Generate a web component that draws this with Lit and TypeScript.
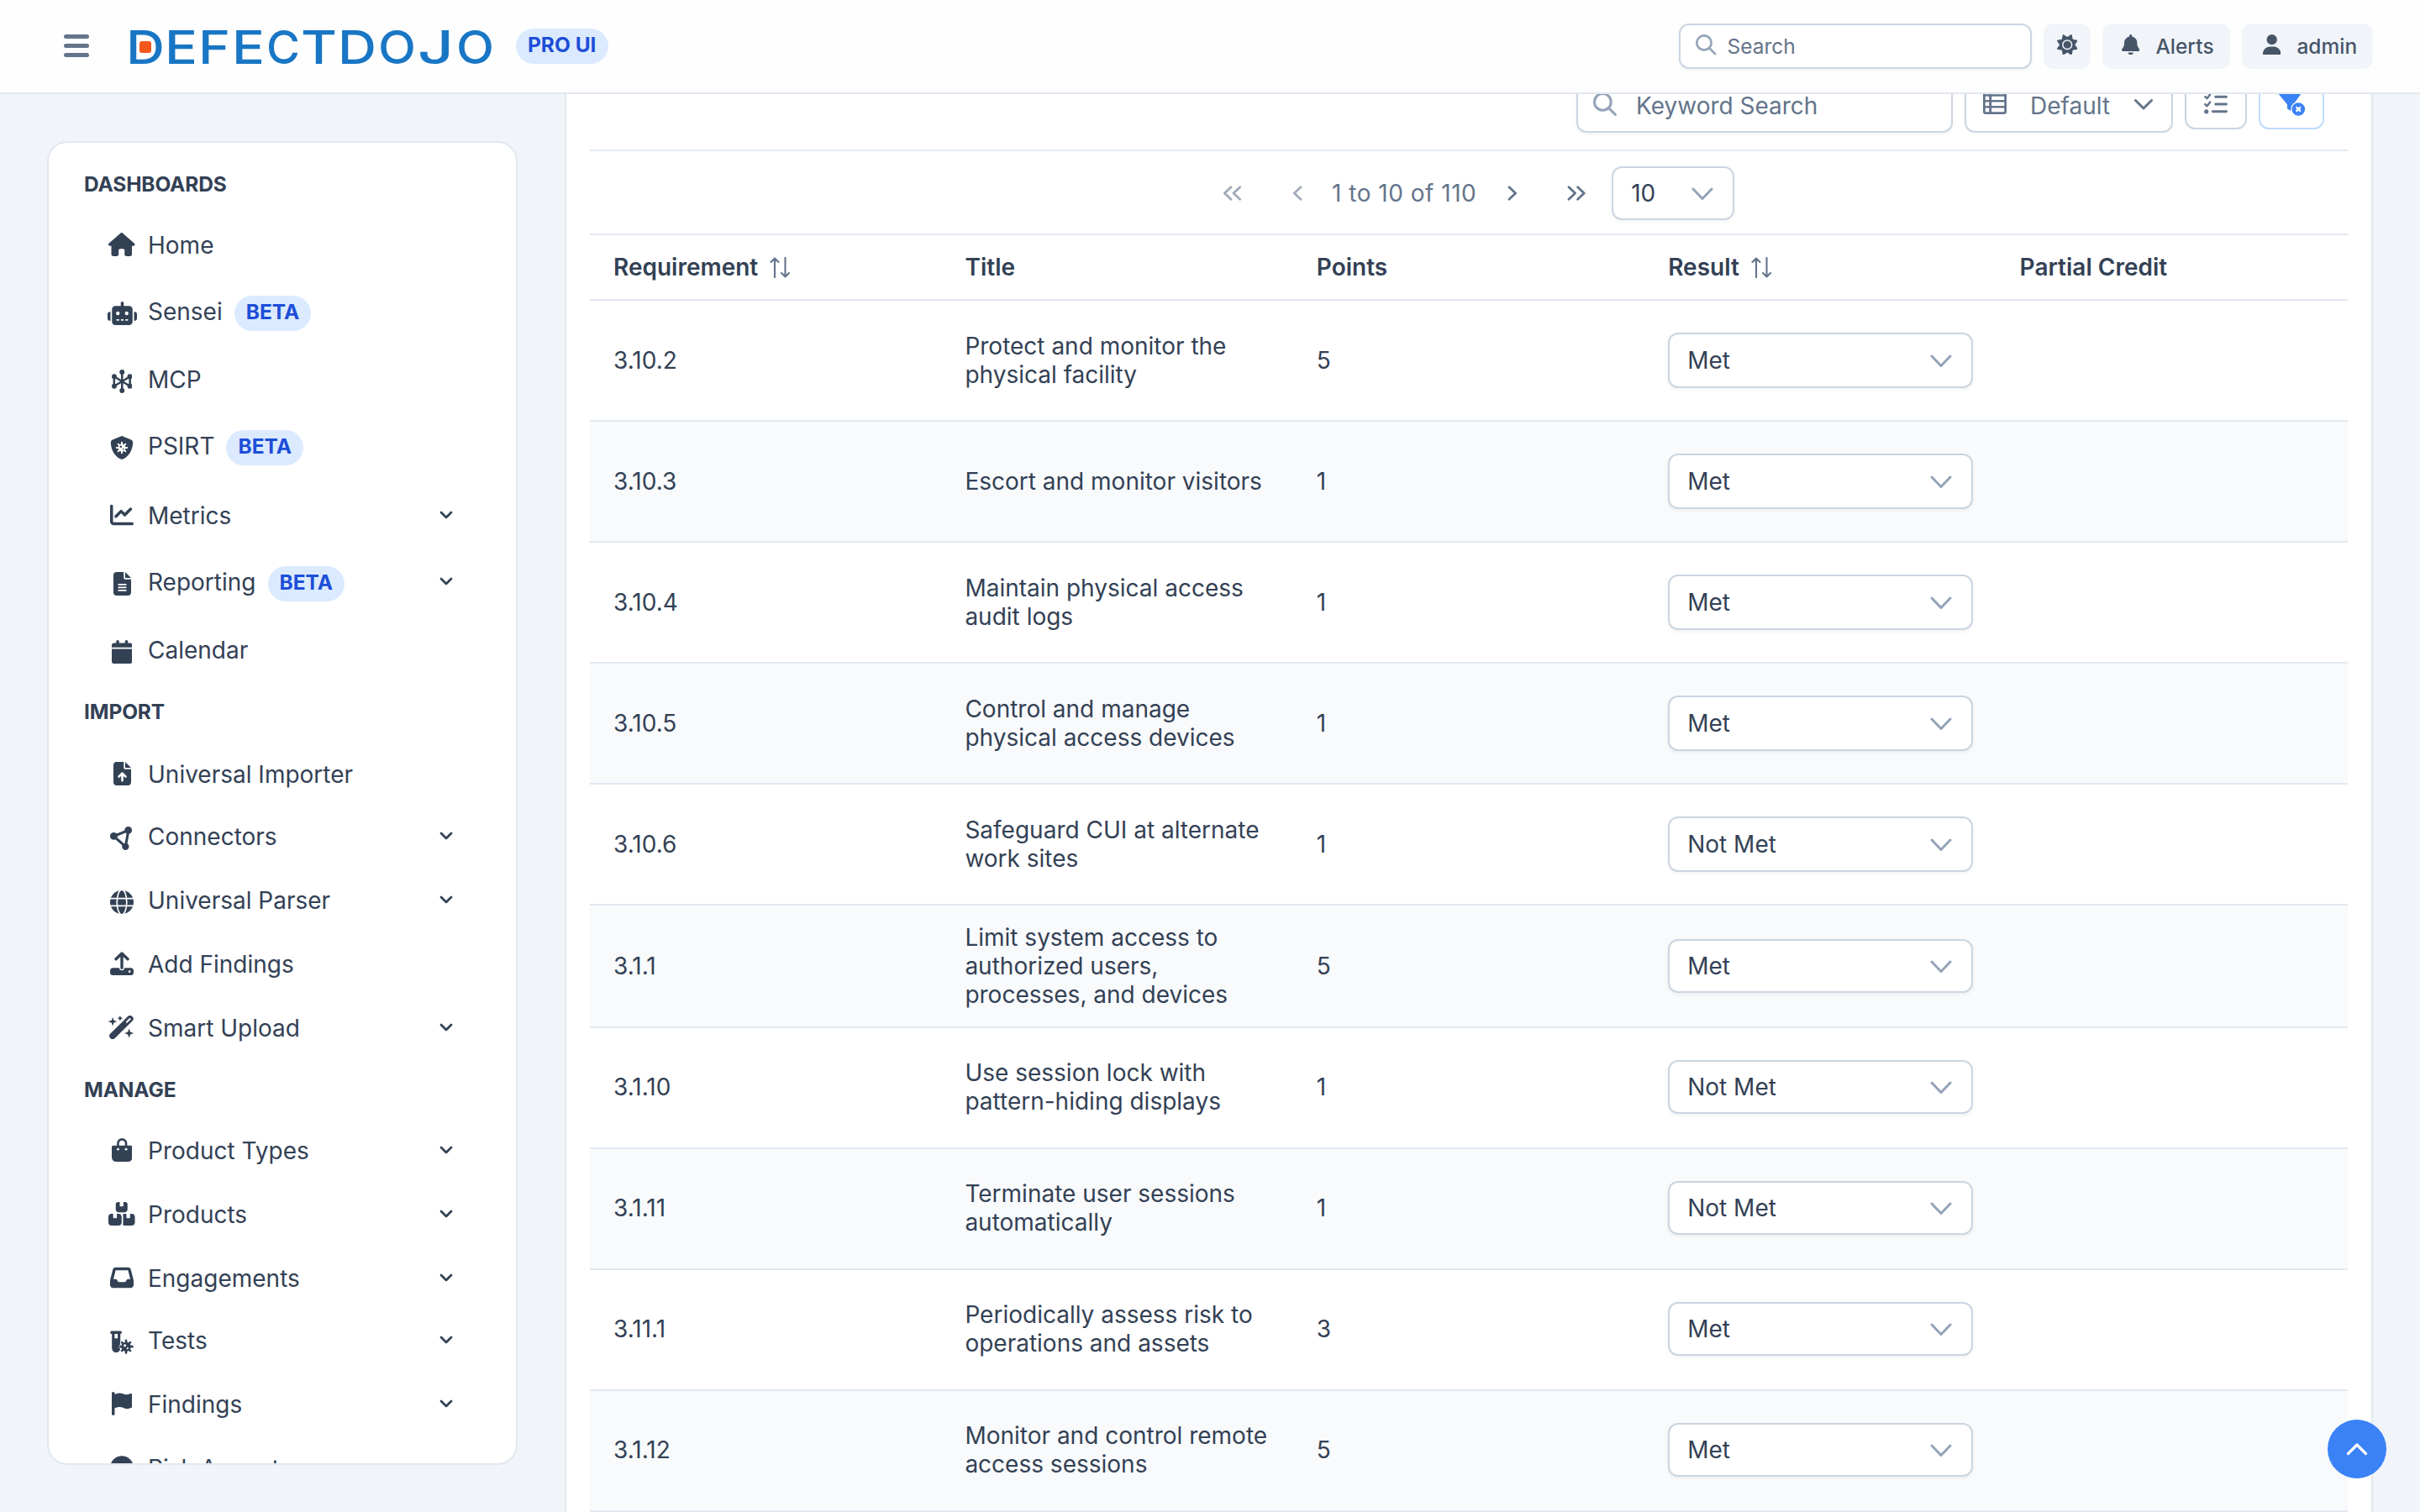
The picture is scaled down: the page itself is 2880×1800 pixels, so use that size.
import { html, LitElement, css, svg, nothing, SVGTemplateResult } from "lit";
import { customElement, property } from "lit/decorators.js";
import { classMap } from "lit/directives/class-map.js";
import { styleMap } from "lit/directives/style-map.js";
import { map } from "lit/directives/map.js";

interface Glyph {
  width: number;
  body: SVGTemplateResult;
}

const file = "M64 0C28.7 0 0 28.7 0 64L0 448c0 35.3 28.7 64 64 64l256 0c35.3 0 64-28.7 64-64l0-288-128 0c-17.7 0-32-14.3-32-32L224 0 64 0zM256 0l0 128 128 0L256 0z";

// every glyph sits on a 512 unit high grid
const glyphs: Record<string, Glyph> = {
  house: {
    width: 576,
    body: svg`<path d="M575.8 255.5c0 18-15 32.1-32 32.1l-32 0 .7 160.2c0 2.7-.2 5.4-.5 8.1l0 16.2c0 22.1-17.9 40-40 40l-16 0c-1.1 0-2.2 0-3.3-.1c-1.4 .1-2.8 .1-4.2 .1L416 512l-24 0c-22.1 0-40-17.9-40-40l0-24 0-64c0-17.7-14.3-32-32-32l-64 0c-17.7 0-32 14.3-32 32l0 64 0 24c0 22.1-17.9 40-40 40l-24 0-31.9 0c-1.5 0-3-.1-4.5-.2c-1.2 .1-2.4 .2-3.6 .2l-16 0c-22.1 0-40-17.9-40-40l0-112c0-.9 0-1.9 .1-2.8l0-69.7-32 0c-18 0-32-14-32-32.1c0-9 3-17 10-24L266.4 8c7-7 15-8 22-8s15 2 21 7L564.8 231.5c8 7 12 15 11 24z"/>`,
  },
  robot: {
    width: 640,
    body: svg`<path fill-rule="evenodd" d="M320 0c17.7 0 32 14.3 32 32l0 64 120 0c39.8 0 72 32.2 72 72l0 272c0 39.8-32.2 72-72 72l-304 0c-39.8 0-72-32.2-72-72l0-272c0-39.8 32.2-72 72-72l120 0 0-64c0-17.7 14.3-32 32-32zM208 384c-8.8 0-16 7.2-16 16s7.2 16 16 16l32 0c8.8 0 16-7.2 16-16s-7.2-16-16-16l-32 0zm96 0c-8.8 0-16 7.2-16 16s7.2 16 16 16l32 0c8.8 0 16-7.2 16-16s-7.2-16-16-16l-32 0zm96 0c-8.8 0-16 7.2-16 16s7.2 16 16 16l32 0c8.8 0 16-7.2 16-16s-7.2-16-16-16l-32 0zM264 256a40 40 0 1 0 -80 0 40 40 0 1 0 80 0zm152 40a40 40 0 1 0 0-80 40 40 0 1 0 0 80zM48 224l16 0 0 192-16 0c-26.5 0-48-21.5-48-48l0-96c0-26.5 21.5-48 48-48zm544 0c26.5 0 48 21.5 48 48l0 96c0 26.5-21.5 48-48 48l-16 0 0-192 16 0z"/>`,
  },
  nodes: {
    width: 448,
    body: svg`<g fill="none" stroke="currentColor" stroke-width="46"><path d="M224 50V462M52 150V362M396 150V362M50 150L398 362M398 150L50 362"/></g>
      <circle cx="224" cy="54" r="54"/><circle cx="224" cy="458" r="54"/><circle cx="54" cy="150" r="54"/><circle cx="54" cy="362" r="54"/><circle cx="394" cy="150" r="54"/><circle cx="394" cy="362" r="54"/>`,
  },
  shield: {
    width: 512,
    body: svg`<path d="M269.4 2.9C265.2 1 260.7 0 256 0s-9.2 1-13.4 2.9L54.3 82.8c-22 9.3-38.4 31-38.3 57.2c.5 99.2 41.3 280.7 213.6 363.2c16.7 8 36.1 8 52.8 0C454.7 420.7 495.5 239.2 496 140c.1-26.2-16.3-47.9-38.3-57.2L269.4 2.9z"/>
      <g stroke="#fff" stroke-width="36" stroke-linecap="round"><path d="M256 142V370M142 256H370M176 176L336 336M336 176L176 336"/></g>
      <circle cx="256" cy="256" r="82" fill="#fff"/><circle cx="234" cy="232" r="23"/><circle cx="288" cy="286" r="15"/>`,
  },
  chart: {
    width: 512,
    body: svg`<path d="M64 64c0-17.7-14.3-32-32-32S0 46.3 0 64L0 400c0 44.2 35.8 80 80 80l400 0c17.7 0 32-14.3 32-32s-14.3-32-32-32L80 416c-8.8 0-16-7.2-16-16L64 64zm406.6 86.6c12.5-12.5 12.5-32.8 0-45.3s-32.8-12.5-45.3 0L320 210.7l-57.4-57.4c-12.5-12.5-32.8-12.5-45.3 0l-112 112c-12.5 12.5-12.5 32.8 0 45.3s32.8 12.5 45.3 0L240 221.3l57.4 57.4c12.5 12.5 32.8 12.5 45.3 0l128-128z"/>`,
  },
  fileLines: {
    width: 384,
    body: svg`<path d=${file}/><path d="M112 272H272M112 336H272M112 400H272" stroke="#fff" stroke-width="30" stroke-linecap="round"/>`,
  },
  calendar: {
    width: 448,
    body: svg`<path d="M96 32l0 32L48 64C21.5 64 0 85.5 0 112l0 48 448 0 0-48c0-26.5-21.5-48-48-48l-48 0 0-32c0-17.7-14.3-32-32-32s-32 14.3-32 32l0 32L160 64l0-32c0-17.7-14.3-32-32-32S96 14.3 96 32zM448 192L0 192 0 464c0 26.5 21.5 48 48 48l352 0c26.5 0 48-21.5 48-48l0-272z"/>`,
  },
  fileUp: {
    width: 384,
    body: svg`<path d=${file}/><path d="M192 408V250M120 320l72-72 72 72" fill="none" stroke="#fff" stroke-width="48" stroke-linecap="round" stroke-linejoin="round"/>`,
  },
  share: {
    width: 512,
    body: svg`<path d="M80 210L400 80 336 436z" fill="none" stroke="currentColor" stroke-width="56"/>
      <circle cx="80" cy="208" r="80"/><circle cx="396" cy="80" r="80"/><circle cx="336" cy="436" r="76"/>`,
  },
  globe: {
    width: 512,
    body: svg`<circle cx="256" cy="256" r="256"/>
      <g fill="none" stroke="#fff" stroke-width="30"><path d="M0 176H512M0 336H512"/><ellipse cx="256" cy="256" rx="106" ry="272"/></g>`,
  },
  upload: {
    width: 512,
    body: svg`<path d="M64 352h384a64 64 0 0 1 64 64v32a64 64 0 0 1-64 64H64a64 64 0 0 1-64-64v-32a64 64 0 0 1 64-64z"/>
      <path d="M256 352V300" stroke="#fff" stroke-width="110" stroke-linecap="round"/>
      <path d="M256 352V50M128 160L256 36 384 160" fill="none" stroke="currentColor" stroke-width="62" stroke-linecap="round" stroke-linejoin="round"/>
      <circle cx="424" cy="432" r="24" fill="#fff"/>`,
  },
  wand: {
    width: 576,
    body: svg`<path d="M92 444L472 70" stroke="currentColor" stroke-width="140" stroke-linecap="round"/>
      <path d="M400 142L470 72" stroke="#fff" stroke-width="36" stroke-linecap="round"/>
      <path d="M94 36l26 68 68 26-68 26-26 72-26-72-70-26 70-26zM254 -4l18 44 46 18-46 18-18 46-18-46-46-18 46-18zM450 282l27 74 74 27-74 27-27 74-27-74-74-27 74-27z"/>`,
  },
  bag: {
    width: 448,
    body: svg`<path d="M32 160h384a32 32 0 0 1 32 32v224a96 96 0 0 1-96 96H96a96 96 0 0 1-96-96V192a32 32 0 0 1 32-32z"/>
      <path d="M136 180V112a88 88 0 0 1 176 0v68" fill="none" stroke="currentColor" stroke-width="48"/>
      <circle cx="136" cy="240" r="25" fill="#fff"/><circle cx="312" cy="240" r="25" fill="#fff"/>`,
  },
  boxes: {
    width: 576,
    body: svg`<path d="M248 0L208 0c-26.5 0-48 21.5-48 48l0 112c0 35.3 28.7 64 64 64l128 0c35.3 0 64-28.7 64-64l0-112c0-26.5-21.5-48-48-48L328 0l0 80c0 8.8-7.2 16-16 16l-48 0c-8.8 0-16-7.2-16-16l0-80zM64 256c-35.3 0-64 28.7-64 64L0 448c0 35.3 28.7 64 64 64l160 0c35.3 0 64-28.7 64-64l0-128c0-35.3-28.7-64-64-64l-40 0 0 80c0 8.8-7.2 16-16 16l-48 0c-8.8 0-16-7.2-16-16l0-80-40 0zM352 512l160 0c35.3 0 64-28.7 64-64l0-128c0-35.3-28.7-64-64-64l-40 0 0 80c0 8.8-7.2 16-16 16l-48 0c-8.8 0-16-7.2-16-16l0-80-40 0c-15 0-28.8 5.1-39.7 13.8c4.9 10.4 7.7 22 7.7 34.2l0 160c0 12.2-2.8 23.8-7.7 34.2C323.2 506.9 337 512 352 512z"/>`,
  },
  inbox: {
    width: 512,
    body: svg`<path fill-rule="evenodd" d="M121 32C91.6 32 66 52 58.9 80.5L1.9 308.4C.6 313.5 0 318.7 0 323.9L0 416c0 35.3 28.7 64 64 64l384 0c35.3 0 64-28.7 64-64l0-92.1c0-5.2-.6-10.4-1.9-15.5l-57-227.9C446 52 420.4 32 391 32L121 32zm0 64l270 0 48 192-51.2 0c-12.1 0-23.2 6.8-28.6 17.7l-14.3 28.6c-5.4 10.8-16.5 17.7-28.6 17.7l-120.4 0c-12.1 0-23.2-6.8-28.6-17.7l-14.3-28.6c-5.4-10.8-16.5-17.7-28.6-17.7L73 288 121 96z"/>`,
  },
  vial: {
    width: 512,
    body: svg`<path fill-rule="evenodd" d="M32 10h192a32 32 0 0 1 0 64v312a92 92 0 0 1-184 0V74a32 32 0 0 1-8-64zM98 74v96h68V74z"/>
      <g stroke="#fff" stroke-width="84" stroke-linecap="round"><path d="M348 226V474M230 350H472M260 262L436 438M436 262L260 438"/></g>
      <g stroke="currentColor" stroke-width="48" stroke-linecap="round"><path d="M348 214V486M216 350H486M256 258L440 442M440 258L256 442"/></g>
      <circle cx="348" cy="350" r="104"/><circle cx="322" cy="326" r="28" fill="#fff"/><circle cx="380" cy="386" r="20" fill="#fff"/>`,
  },
  flag: {
    width: 448,
    body: svg`<path d="M64 32C64 14.3 49.7 0 32 0S0 14.3 0 32L0 64 0 368 0 480c0 17.7 14.3 32 32 32s32-14.3 32-32l0-128 64.3-16.1c41.1-10.3 84.6-5.5 122.5 13.4c44.2 22.1 95.5 24.8 141.7 7.4l34.7-13c12.5-4.7 20.8-16.6 20.8-30l0-247.7c0-23-24.2-38-44.8-27.7l-9.6 4.8c-46.3 23.2-100.8 23.2-147.1 0c-35.1-17.6-75.4-22-113.5-12.5L64 48l0-16z"/>`,
  },
  circle: { width: 512, body: svg`<circle cx="256" cy="256" r="252"/>` },
  bell: {
    width: 448,
    body: svg`<path d="M224 0c-17.7 0-32 14.3-32 32l0 19.2C119 66 64 130.6 64 208l0 18.8c0 47-17.3 92.4-48.5 127.6l-7.4 8.3c-8.4 9.4-10.4 22.9-5.3 34.4S19.4 416 32 416l384 0c12.6 0 24-7.4 29.2-18.9s3.1-25-5.3-34.4l-7.4-8.3C401.3 319.2 384 273.9 384 226.8l0-18.8c0-77.4-55-142-128-156.8L256 32c0-17.7-14.3-32-32-32zm45.3 493.3c12-12 18.7-28.3 18.7-45.3l-64 0-64 0c0 17 6.7 33.3 18.7 45.3s28.3 18.7 45.3 18.7s33.3-6.7 45.3-18.7z"/>`,
  },
  user: {
    width: 448,
    body: svg`<path d="M224 256A128 128 0 1 0 224 0a128 128 0 1 0 0 256zm-45.7 48C79.8 304 0 383.8 0 482.3C0 498.7 13.3 512 29.7 512l388.6 0c16.4 0 29.7-13.3 29.7-29.7C448 383.8 368.2 304 269.7 304l-91.4 0z"/>`,
  },
  sun: {
    width: 512,
    body: svg`<path fill-rule="evenodd" d="M361.5 1.2c5 2.1 8.6 6.6 9.6 11.9L391 121l107.9 19.8c5.3 1 9.8 4.6 11.9 9.6s1.5 10.7-1.6 15.2L446.9 256l62.3 90.3c3.1 4.5 3.7 10.2 1.6 15.2s-6.6 8.6-11.9 9.6L391 391 371.1 498.9c-1 5.3-4.6 9.8-9.6 11.9s-10.7 1.5-15.2-1.6L256 446.9l-90.3 62.3c-4.5 3.1-10.2 3.7-15.2 1.6s-8.6-6.6-9.6-11.9L121 391 13.1 371.1c-5.3-1-9.8-4.6-11.9-9.6s-1.5-10.7 1.6-15.2L65.1 256 2.8 165.7c-3.1-4.5-3.7-10.2-1.6-15.2s6.6-8.6 11.9-9.6L121 121 140.9 13.1c1-5.3 4.6-9.8 9.6-11.9s10.7-1.5 15.2 1.6L256 65.1 346.3 2.8c4.5-3.1 10.2-3.7 15.2-1.6zM384 256a128 128 0 1 0 -256 0 128 128 0 1 0 256 0z"/><circle cx="256" cy="256" r="96"/>`,
  },
  search: {
    width: 512,
    body: svg`<g fill="none" stroke="currentColor" stroke-width="56" stroke-linecap="round"><circle cx="208" cy="208" r="180"/><path d="M340 340L484 484"/></g>`,
  },
  table: {
    width: 512,
    body: svg`<rect width="512" height="512" rx="56"/><path fill="#fff" d="M50 4h82v74H50zM186 4h276v74H186zM50 124h82v76H50zM186 124h276v76H186zM50 246h82v84H50zM186 246h276v84H186zM50 376h82v86H50zM186 376h276v86H186z"/>`,
  },
  checklist: {
    width: 512,
    body: svg`<g fill="none" stroke="currentColor" stroke-width="54" stroke-linecap="round" stroke-linejoin="round"><path d="M250 96H484M250 256H484M190 416H484"/><path d="M24 92l40 40 68-88M24 258l40 40 68-88" stroke-width="44"/></g><circle cx="50" cy="416" r="48"/>`,
  },
  funnel: {
    width: 584,
    body: svg`<path d="M0 20H512L336 260V440L200 350V260z"/><circle cx="444" cy="366" r="166" fill="#fff"/><circle cx="444" cy="366" r="142"/>
      <path d="M396 318l96 96M492 318l-96 96" stroke="#fff" stroke-width="42"/>`,
  },
};

@customElement("ui-icon")
export class UiIcon extends LitElement {
  @property() name = "";

  static styles = css`
    :host {
      display: inline-flex;
      font-size: 28px;
    }

    svg {
      height: 1em;
      fill: currentColor;
    }
  `;

  render() {
    const glyph = glyphs[this.name];
    return html`<svg
      viewBox="0 0 ${glyph.width} 512"
      style=${styleMap({ width: `${glyph.width / 512}em` })}
      aria-hidden="true"
    >
      ${glyph.body}
    </svg>`;
  }
}

// open stroked marks: chevrons and the sort arrows
const strokes: Record<string, { w: number; h: number; d: string; weight: number }> = {
  down: { w: 26, h: 16, d: "M2 2L13 13.5 24 2", weight: 3 },
  downWide: { w: 24, h: 16, d: "M2.5 2.5L12 12 21.5 2.5", weight: 3 },
  downSmall: { w: 16, h: 10, d: "M2 2L8 8 14 2", weight: 2.8 },
  up: { w: 26, h: 16, d: "M2.5 13.5L13 3 23.5 13.5", weight: 3.2 },
  left: { w: 12, h: 18, d: "M10 1.8L2.4 9 10 16.2", weight: 2.8 },
  right: { w: 12, h: 18, d: "M2 1.8L9.6 9 2 16.2", weight: 2.8 },
  first: { w: 23, h: 18, d: "M10 1.8L2.4 9 10 16.2M20.6 1.8L13 9 20.6 16.2", weight: 2.8 },
  last: { w: 23, h: 18, d: "M2 1.8L9.6 9 2 16.2M12.6 1.8L20.2 9 12.6 16.2", weight: 2.8 },
  sort: { w: 25, h: 25, d: "M6 24V1.5M1.5 6L6 1.5 10.5 6M18.5 1V23.5M14 19L18.5 23.5 23 19", weight: 2.1 },
};

const stroke = (name: string) => {
  const s = strokes[name];
  return html`<svg
    class="stroke"
    width=${s.w}
    height=${s.h}
    viewBox="0 0 ${s.w} ${s.h}"
    fill="none"
    stroke="currentColor"
    stroke-width=${s.weight}
    stroke-linecap="round"
    stroke-linejoin="round"
    aria-hidden="true"
  >
    <path d=${s.d} />
  </svg>`;
};

interface NavItem {
  icon: string;
  label: string;
  height: number;
  beta?: boolean;
  opens?: boolean;
  low?: boolean;
}

interface NavSection {
  title: string;
  height: number;
  items: NavItem[];
}

const sections: NavSection[] = [
  {
    title: "DASHBOARDS",
    height: 71,
    items: [
      { icon: "house", label: "Home", height: 79 },
      { icon: "robot", label: "Sensei", height: 81, beta: true, low: true },
      { icon: "nodes", label: "MCP", height: 79, low: true },
      { icon: "shield", label: "PSIRT", height: 83, beta: true, low: true },
      { icon: "chart", label: "Metrics", height: 79, opens: true },
      { icon: "fileLines", label: "Reporting", height: 81, beta: true, opens: true, low: true },
      { icon: "calendar", label: "Calendar", height: 75, low: true },
    ],
  },
  {
    title: "IMPORT",
    height: 73,
    items: [
      { icon: "fileUp", label: "Universal Importer", height: 74 },
      { icon: "share", label: "Connectors", height: 76, opens: true, low: true },
      { icon: "globe", label: "Universal Parser", height: 76, opens: true, low: true },
      { icon: "upload", label: "Add Findings", height: 76 },
      { icon: "wand", label: "Smart Upload", height: 75, opens: true },
    ],
  },
  {
    title: "MANAGE",
    height: 71,
    items: [
      { icon: "bag", label: "Product Types", height: 76, opens: true },
      { icon: "boxes", label: "Products", height: 76, opens: true },
      { icon: "inbox", label: "Engagements", height: 74, opens: true },
      { icon: "vial", label: "Tests", height: 76, opens: true, low: true },
      { icon: "flag", label: "Findings", height: 76, opens: true },
      { icon: "circle", label: "Risk Acceptances", height: 76, opens: true },
    ],
  },
];

@customElement("side-nav")
export class SideNav extends LitElement {
  static styles = css`
    :host {
      display: block;
      box-sizing: border-box;
      width: 560px;
      height: 1576px;
      padding: 34px 42px 0;
      overflow: hidden;
      border: 2px solid #e2e8f0;
      border-radius: 24px;
      background: #fff;
      color: #334155;
      font-size: 28px;
      line-height: 34px;
    }

    .title {
      font-size: 24.5px;
      font-weight: 700;
      letter-spacing: -0.15px;
      line-height: 30px;
    }

    .item {
      display: flex;
      align-items: flex-start;
    }

    .icon {
      display: flex;
      flex: none;
      justify-content: center;
      width: 36px;
      margin: 2px 13px 0 27px;
    }

    .low .icon {
      margin-top: 5px;
    }

    .label {
      flex: none;
      white-space: nowrap;
    }

    .beta {
      box-sizing: border-box;
      height: 42px;
      margin: -2px 0 0 14px;
      padding: 4px 14px 0;
      border-radius: 21px;
      background: #dbeafe;
      color: #1d4ed8;
      font-size: 24.5px;
      font-weight: 700;
      line-height: 30px;
    }

    .caret {
      display: flex;
      margin: 11px 33px 0 auto;
    }
  `;

  render() {
    return html`${map(
      sections,
      (section) => html`
        <div class="title" style=${styleMap({ height: `${section.height}px` })}>
          ${section.title}
        </div>
        ${map(
          section.items,
          (item) => html`<div
            class=${classMap({ item: true, low: !!item.low })}
            style=${styleMap({ height: `${item.height}px` })}
          >
            <span class="icon"><ui-icon name=${item.icon}></ui-icon></span>
            <span class="label">${item.label}</span>
            ${item.beta ? html`<span class="beta">BETA</span>` : nothing}
            ${item.opens ? html`<span class="caret">${stroke("downSmall")}</span>` : nothing}
          </div>`
        )}
      `
    )}`;
  }
}

// letter, left edge and width of each character in the wordmark
const wordmark: [string, number, number][] = [
  ["D", -3, 46],
  ["E", 43, 39],
  ["F", 83, 38],
  ["E", 123, 39],
  ["C", 164, 40],
  ["T", 205, 43],
  ["D", 249, 46],
  ["O", 297, 45],
  ["J", 344, 43],
  ["O", 390, 45],
];

@customElement("top-bar")
export class TopBar extends LitElement {
  static styles = css`
    :host {
      display: flex;
      align-items: flex-start;
      box-sizing: border-box;
      height: 112px;
      padding: 28px 56px 0 76px;
      border-bottom: 2px solid #e2e8f0;
      background: #fefefe;
      color: #475569;
      font-size: 24.5px;
      line-height: 30px;
    }

    .menu {
      display: flex;
      flex-direction: column;
      gap: 6px;
      width: 30px;
      margin-top: 13px;
    }

    .bar {
      height: 5px;
      border-radius: 3px;
      background: #64748b;
    }

    .logo {
      width: 434px;
      height: 70px;
      margin: -7px 0 0 47px;
      overflow: visible;
      fill: #1976c5;
      font: 500 55px Inter, sans-serif;
    }

    .dot {
      fill: #f4581c;
    }

    .pro {
      box-sizing: border-box;
      width: 110px;
      height: 42px;
      margin: 6px auto 0 27px;
      padding: 4px 0 0 14px;
      border-radius: 21px;
      background: #dbeafe;
      color: #1d4ed8;
      font-weight: 700;
    }

    .search,
    .button {
      display: flex;
      align-items: center;
      box-sizing: border-box;
      height: 54px;
      border-radius: 12px;
    }

    .search {
      gap: 13px;
      width: 420px;
      padding-left: 18px;
      border: 2px solid #cbd5e1;
      background: #fff;
      color: #64748b;
      box-shadow: 0 2px 4px rgba(18, 18, 23, 0.05);
    }

    .button {
      margin-left: 14px;
      background: #f1f5f9;
      font-weight: 500;
    }

    .theme {
      justify-content: center;
      width: 56px;
    }

    .alerts {
      gap: 19px;
      width: 152px;
      padding-left: 23px;
    }

    .account {
      gap: 19px;
      width: 156px;
      padding-left: 25px;
    }

    ui-icon {
      margin-bottom: 4px;
      font-size: 24.5px;
    }

    .search ui-icon {
      margin-bottom: 3px;
      color: #94a3b8;
    }
  `;

  render() {
    return html`
      <div class="menu">
        <span class="bar"></span><span class="bar"></span><span class="bar"></span>
      </div>
      <svg class="logo" viewBox="0 0 434 70" aria-label="DefectDojo">
        <text y="55">
          ${map(
            wordmark,
            ([letter, x, width]) =>
              svg`<tspan x=${x} textLength=${width} lengthAdjust="spacingAndGlyphs">${letter}</tspan>`
          )}
        </text>
        <rect class="dot" x="13" y="28" width="14" height="14" rx="3" />
      </svg>
      <span class="pro">PRO UI</span>
      <div class="search"><ui-icon name="search"></ui-icon>Search</div>
      <div class="button theme"><ui-icon name="sun"></ui-icon></div>
      <div class="button alerts"><ui-icon name="bell"></ui-icon>Alerts</div>
      <div class="button account"><ui-icon name="user"></ui-icon>admin</div>
    `;
  }
}

const rows: [string, string, number, string][] = [
  ["3.10.2", "Protect and monitor the physical facility", 5, "Met"],
  ["3.10.3", "Escort and monitor visitors", 1, "Met"],
  ["3.10.4", "Maintain physical access audit logs", 1, "Met"],
  ["3.10.5", "Control and manage physical access devices", 1, "Met"],
  ["3.10.6", "Safeguard CUI at alternate work sites", 1, "Not Met"],
  ["3.1.1", "Limit system access to authorized users, processes, and devices", 5, "Met"],
  ["3.1.10", "Use session lock with pattern-hiding displays", 1, "Not Met"],
  ["3.1.11", "Terminate user sessions automatically", 1, "Not Met"],
  ["3.11.1", "Periodically assess risk to operations and assets", 3, "Met"],
  ["3.1.12", "Monitor and control remote access sessions", 5, "Met"],
];

@customElement("requirement-table")
export class RequirementTable extends LitElement {
  static styles = css`
    :host {
      display: block;
      box-sizing: border-box;
      width: 2152px;
      height: 1688px;
      padding: 0 28px;
      overflow: hidden;
      border: solid #e2e8f0;
      border-width: 0 2px;
      background: #fff;
      color: #334155;
      font-size: 28px;
      line-height: 34px;
    }

    .toolbar {
      display: flex;
      align-items: flex-start;
      justify-content: flex-end;
      gap: 14px;
      box-sizing: border-box;
      height: 86px;
      margin-top: -18px;
      padding-right: 28px;
      border-bottom: 2px solid #e2e8f0;
      color: #64748b;
    }

    .field {
      display: flex;
      align-items: center;
      box-sizing: border-box;
      height: 64px;
      border: 2px solid #cbd5e1;
      border-radius: 12px;
      background: #fff;
      box-shadow: 0 2px 4px rgba(18, 18, 23, 0.05);
    }

    .keyword {
      gap: 23px;
      width: 448px;
      padding-left: 18px;
    }

    .keyword ui-icon {
      margin-bottom: 4px;
      color: #94a3b8;
    }

    .view {
      width: 248px;
      padding: 0 21px 0 20px;
      box-shadow: none;
    }

    .view ui-icon {
      margin: 0 28px 8px 0;
    }

    .view .stroke {
      margin: 0 0 2px auto;
    }

    .tool {
      display: flex;
      justify-content: center;
      box-sizing: border-box;
      width: 74px;
      height: 60px;
      padding-top: 14px;
      border: 2px solid #cbd5e1;
      border-radius: 12px;
    }

    .clear {
      width: 78px;
      border-color: #bfdbfe;
      color: #3b82f6;
    }

    .pager {
      display: flex;
      align-items: center;
      box-sizing: border-box;
      height: 100px;
      padding: 2px 0 0 753px;
      border-bottom: 2px solid #e2e8f0;
      color: #64748b;
    }

    .count {
      letter-spacing: 0.5px;
    }

    .off {
      opacity: 0.6;
    }

    .prev {
      margin: 0 35px 0 60px;
    }

    .next {
      margin: 0 59px 0 37px;
    }

    .pager span {
      display: flex;
    }

    .size {
      width: 146px;
      margin-left: 30px;
    }

    .select {
      justify-content: space-between;
      padding: 0 23px 0 21px;
      color: #334155;
    }

    .select .stroke {
      margin-top: 2px;
      color: #94a3b8;
    }

    .row {
      display: grid;
      grid-template-columns: repeat(5, 1fr);
      align-items: center;
      box-sizing: border-box;
      min-height: 144px;
      border-bottom: 2px solid #e2e8f0;
    }

    .row:nth-child(even) {
      background: #f8fafc;
    }

    .cell {
      padding: 21px 28px;
    }

    .row .select {
      height: 66px;
      margin: -21px 0;
    }

    .row:nth-child(n + 6) .select {
      height: 64px;
    }

    .row:nth-child(n + 7) .cell {
      padding: 20px 28px 22px;
    }

    .head {
      min-height: 78px;
      font-weight: 600;
    }

    .head .cell {
      display: flex;
      align-items: center;
      gap: 14px;
    }

    .head .stroke {
      color: #64748b;
    }
  `;

  render() {
    return html`
      <div class="toolbar">
        <div class="field keyword"><ui-icon name="search"></ui-icon>Keyword Search</div>
        <div class="field view">
          <ui-icon name="table"></ui-icon>Default ${stroke("downWide")}
        </div>
        <div class="tool"><ui-icon name="checklist"></ui-icon></div>
        <div class="tool clear"><ui-icon name="funnel"></ui-icon></div>
      </div>
      <div class="pager">
        <span class="off">${stroke("first")}</span>
        <span class="off prev">${stroke("left")}</span>
        <span class="count">1 to 10 of 110</span>
        <span class="next">${stroke("right")}</span>
        <span>${stroke("last")}</span>
        <div class="field select size">10 ${stroke("down")}</div>
      </div>
      <section>
        <div class="row head">
          <div class="cell">Requirement ${stroke("sort")}</div>
          <div class="cell">Title</div>
          <div class="cell">Points</div>
          <div class="cell">Result ${stroke("sort")}</div>
          <div class="cell">Partial Credit</div>
        </div>
      </section>
      <section>
        ${map(
          rows,
          ([requirement, title, points, result]) => html`<div class="row">
            <div class="cell">${requirement}</div>
            <div class="cell">${title}</div>
            <div class="cell">${points}</div>
            <div class="cell">
              <div class="field select">${result} ${stroke("down")}</div>
            </div>
          </div>`
        )}
      </section>
    `;
  }
}

@customElement("app-root")
export class AppRoot extends LitElement {
  static styles = css`
    :host {
      display: block;
      position: relative;
      width: 2880px;
      height: 1800px;
      overflow: hidden;
      background: #f1f5f9;
      font-family: Inter, sans-serif;
    }

    .page {
      display: flex;
      gap: 56px;
      padding-left: 56px;
    }

    side-nav {
      margin-top: 56px;
    }

    .scroll-top {
      display: flex;
      position: absolute;
      right: 40px;
      bottom: 40px;
      align-items: center;
      justify-content: center;
      width: 70px;
      height: 70px;
      border-radius: 50%;
      background: #3b82f6;
      color: #fff;
    }
  `;

  render() {
    return html`
      <top-bar></top-bar>
      <div class="page">
        <side-nav></side-nav>
        <requirement-table></requirement-table>
      </div>
      <div class="scroll-top">${stroke("up")}</div>
    `;
  }
}

declare global {
  interface HTMLElementTagNameMap {
    "app-root": AppRoot;
    "top-bar": TopBar;
    "side-nav": SideNav;
    "requirement-table": RequirementTable;
    "ui-icon": UiIcon;
  }
}
